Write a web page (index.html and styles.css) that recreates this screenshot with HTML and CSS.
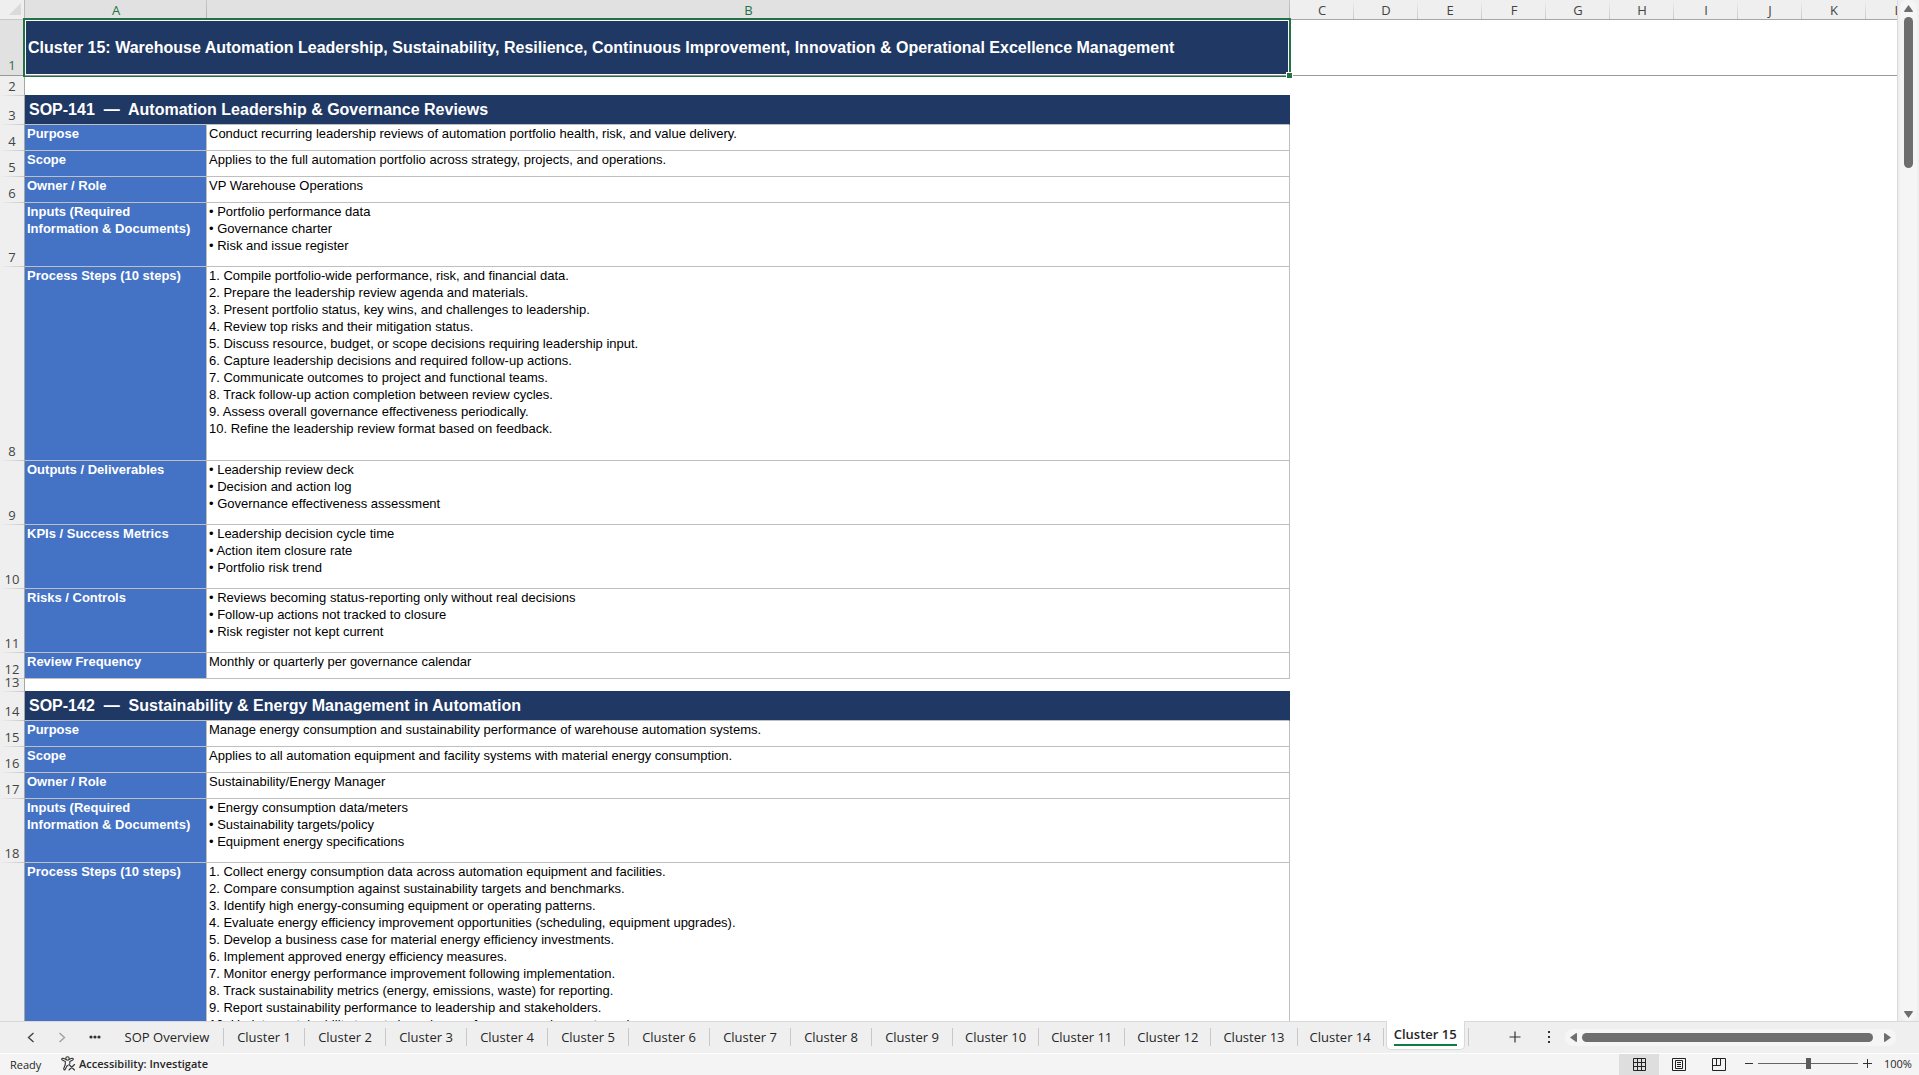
FILE: index.html
```html
<!DOCTYPE html>
<html lang="en">
<head>
  <meta charset="utf-8">
  <title>Cluster 15</title>
  <link rel="stylesheet" href="styles.css">
</head>
<body>
  <!--grid-->
  <main id="gridFrame">
    <div class="grid">
      <table class="sheet">
        <colgroup>
          <col class="col-num"><col class="col-a"><col class="col-b">
          <col span="10">
        </colgroup>
        <thead>
          <tr>
            <td class="corner"><svg width="12" height="12" viewBox="0 0 12 12"><path d="M12 0V12H0Z" fill="#dadada"/></svg></td>
            <th class="active">A</th><th class="active">B</th>
            <th>C</th><th>D</th><th>E</th><th>F</th><th>G</th><th>H</th><th>I</th><th>J</th><th>K</th><th>L</th>
          </tr>
        </thead>
        <tbody>
          <tr class="row-title">
            <th class="active">1</th>
            <td class="title" colspan="2">Cluster 15: Warehouse Automation Leadership, Sustainability, Resilience, Continuous Improvement, Innovation &amp; Operational Excellence Management<span class="selection"><span class="handle"></span></span></td>
            <td class="rest" colspan="10"></td>
          </tr>
          <tr class="row-gap"><th>2</th><td class="gap" colspan="2"></td></tr>

          <!--SOP-141-->
          <tr class="row-sop"><th>3</th><td class="sop" colspan="2">SOP-141&nbsp; —&nbsp; Automation Leadership &amp; Governance Reviews</td></tr>
          <tr class="row-line"><th>4</th><td class="label">Purpose</td><td>Conduct recurring leadership reviews of automation portfolio health, risk, and value delivery.</td></tr>
          <tr class="row-line"><th>5</th><td class="label">Scope</td><td>Applies to the full automation portfolio across strategy, projects, and operations.</td></tr>
          <tr class="row-line"><th>6</th><td class="label">Owner / Role</td><td>VP Warehouse Operations</td></tr>
          <tr class="row-list"><th>7</th><td class="label">Inputs (Required Information &amp; Documents)</td>
            <td>• Portfolio performance data<br>• Governance charter<br>• Risk and issue register</td></tr>
          <tr class="row-steps"><th>8</th><td class="label">Process Steps (10 steps)</td>
            <td>1. Compile portfolio-wide performance, risk, and financial data.<br>
              2. Prepare the leadership review agenda and materials.<br>
              3. Present portfolio status, key wins, and challenges to leadership.<br>
              4. Review top risks and their mitigation status.<br>
              5. Discuss resource, budget, or scope decisions requiring leadership input.<br>
              6. Capture leadership decisions and required follow-up actions.<br>
              7. Communicate outcomes to project and functional teams.<br>
              8. Track follow-up action completion between review cycles.<br>
              9. Assess overall governance effectiveness periodically.<br>
              10. Refine the leadership review format based on feedback.</td></tr>
          <tr class="row-list"><th>9</th><td class="label">Outputs / Deliverables</td>
            <td>• Leadership review deck<br>• Decision and action log<br>• Governance effectiveness assessment</td></tr>
          <tr class="row-list"><th>10</th><td class="label">KPIs / Success Metrics</td>
            <td>• Leadership decision cycle time<br>• Action item closure rate<br>• Portfolio risk trend</td></tr>
          <tr class="row-list"><th>11</th><td class="label">Risks / Controls</td>
            <td>• Reviews becoming status-reporting only without real decisions<br>• Follow-up actions not tracked to closure<br>• Risk register not kept current</td></tr>
          <tr class="row-line"><th>12</th><td class="label">Review Frequency</td><td>Monthly or quarterly per governance calendar</td></tr>
          <tr class="row-thin"><th>13</th><td class="gap" colspan="2"></td></tr>

          <!--SOP-142-->
          <tr class="row-sop"><th>14</th><td class="sop" colspan="2">SOP-142&nbsp; —&nbsp; Sustainability &amp; Energy Management in Automation</td></tr>
          <tr class="row-line"><th>15</th><td class="label">Purpose</td><td>Manage energy consumption and sustainability performance of warehouse automation systems.</td></tr>
          <tr class="row-line"><th>16</th><td class="label">Scope</td><td>Applies to all automation equipment and facility systems with material energy consumption.</td></tr>
          <tr class="row-line"><th>17</th><td class="label">Owner / Role</td><td>Sustainability/Energy Manager</td></tr>
          <tr class="row-list"><th>18</th><td class="label">Inputs (Required Information &amp; Documents)</td>
            <td>• Energy consumption data/meters<br>• Sustainability targets/policy<br>• Equipment energy specifications</td></tr>
          <tr class="row-steps"><th></th><td class="label">Process Steps (10 steps)</td>
            <td>1. Collect energy consumption data across automation equipment and facilities.<br>
              2. Compare consumption against sustainability targets and benchmarks.<br>
              3. Identify high energy-consuming equipment or operating patterns.<br>
              4. Evaluate energy efficiency improvement opportunities (scheduling, equipment upgrades).<br>
              5. Develop a business case for material energy efficiency investments.<br>
              6. Implement approved energy efficiency measures.<br>
              7. Monitor energy performance improvement following implementation.<br>
              8. Track sustainability metrics (energy, emissions, waste) for reporting.<br>
              9. Report sustainability performance to leadership and stakeholders.<br>
              10. Update sustainability targets based on performance and current needs.</td></tr>
        </tbody>
      </table>
    </div>
    <div class="scroll-side">
      <div class="vscroll">
        <button type="button" aria-label="Scroll up"><svg width="9" height="7" viewBox="0 0 9 7"><path d="M4.5 0 9 6.2Q9 7 8 7H1Q0 7 0 6.2Z" fill="#6e6e6e"/></svg></button>
        <div class="vthumb"></div>
        <button type="button" class="down" aria-label="Scroll down"><svg width="9" height="7" viewBox="0 0 9 7"><path d="M4.5 7 9 .8Q9 0 8 0H1Q0 0 0 .8Z" fill="#6e6e6e"/></svg></button>
      </div>
    </div>
  </main>

  <!--sheet tabs-->
  <nav class="tabbar">
    <div class="tab-nav">
      <button type="button" aria-label="Previous sheet"><svg width="8" height="11" viewBox="0 0 8 11"><path d="M6.500 1 1.500 5.500 6.500 10" fill="none" stroke="#444" stroke-width="1.400"/></svg></button>
      <button type="button" aria-label="Next sheet"><svg width="8" height="11" viewBox="0 0 8 11"><path d="M1.500 1 6.500 5.500 1.500 10" fill="none" stroke="#a0a0a0" stroke-width="1.400"/></svg></button>
      <button type="button" aria-label="More sheets"><svg width="12" height="4" viewBox="0 0 12 4"><circle cx="2" cy="2" r="1.600" fill="#333"/><circle cx="6" cy="2" r="1.600" fill="#333"/><circle cx="10" cy="2" r="1.600" fill="#333"/></svg></button>
    </div>
    <div class="tabs">
      <button type="button" class="tab">SOP Overview</button>
      <button type="button" class="tab">Cluster 1</button>
      <button type="button" class="tab">Cluster 2</button>
      <button type="button" class="tab">Cluster 3</button>
      <button type="button" class="tab">Cluster 4</button>
      <button type="button" class="tab">Cluster 5</button>
      <button type="button" class="tab">Cluster 6</button>
      <button type="button" class="tab">Cluster 7</button>
      <button type="button" class="tab">Cluster 8</button>
      <button type="button" class="tab">Cluster 9</button>
      <button type="button" class="tab">Cluster 10</button>
      <button type="button" class="tab">Cluster 11</button>
      <button type="button" class="tab">Cluster 12</button>
      <button type="button" class="tab">Cluster 13</button>
      <button type="button" class="tab">Cluster 14</button>
      <button type="button" class="tab current"><span>Cluster 15</span></button>
      <button type="button" class="add" aria-label="New sheet"><svg width="12" height="12" viewBox="0 0 12 12"><path d="M6 .5V11.500M.5 6H11.500" stroke="#333" stroke-width="1.200"/></svg></button>
    </div>
    <svg class="grip" width="2" height="12" viewBox="0 0 2 12"><path d="M0 1H2M0 6H2M0 11H2" stroke="#333" stroke-width="2"/></svg>
    <div class="hscroll">
      <button type="button" aria-label="Scroll left"><svg width="7" height="9" viewBox="0 0 7 9"><path d="M0 4.500 6.200 0Q7 0 7 1V8Q7 9 6.200 9Z" fill="#6e6e6e"/></svg></button>
      <div class="hthumb"></div>
      <button type="button" aria-label="Scroll right"><svg width="7" height="9" viewBox="0 0 7 9"><path d="M7 4.500.8 0Q0 0 0 1V8Q0 9 .8 9Z" fill="#6e6e6e"/></svg></button>
    </div>
  </nav>

  <!--status bar-->
  <footer class="status">
    <span class="ready">Ready</span>
    <button type="button" class="access">
      <svg width="15" height="15" viewBox="0 0 15 15" fill="none" stroke="#333" stroke-width="1.100" stroke-linejoin="round" stroke-linecap="round"><circle cx="6.500" cy="2.500" r="1.700"/><path d="M4.800 3.300 2 2.300Q.6 2.200.8 3.400L1.200 4 4.300 5.400V8.300L2.700 12.800Q2.800 14.200 4 13.800L6.200 9.600 7 9.800M8.200 3.300 11 2.300Q12.500 2.200 12.200 3.400L11.800 4 8.800 5.400V7.500M8 8.500 13.500 14M13.500 8.500 8 14"/></svg>
      Accessibility: Investigate
    </button>
    <div class="views">
      <button type="button" class="on" aria-label="Normal"><svg width="13" height="13" viewBox="0 0 13 13" fill="none" stroke="#222"><path d="M.5.5H12.500V12.500H.5ZM4.500.5V12.500M8.500.5V12.500M.5 4.500H12.500M.5 8.500H12.500"/></svg></button>
      <button type="button" aria-label="Page layout"><svg width="14" height="13" viewBox="0 0 14 13" fill="none" stroke="#222"><path d="M.5.5H13.500V12.500H.5ZM3.500 2.500H10.500V10.500H3.500ZM5 4.500H9M5 6.500H9M5 8.500H9"/></svg></button>
      <button type="button" aria-label="Page break preview"><svg width="14" height="13" viewBox="0 0 14 13" fill="none" stroke="#222"><path d="M.5.5H13.500V12.500H.5ZM4.500.5V7.500M8.500.5V7.500M.5 7.500H8.500"/></svg></button>
    </div>
    <div class="zoom">
      <button type="button" aria-label="Zoom out"><svg width="9" height="9" viewBox="0 0 9 9"><path d="M0 4.500H8" stroke="#333"/></svg></button>
      <input type="range" min="0" max="100" value="50" aria-label="Zoom">
      <button type="button" aria-label="Zoom in"><svg width="9" height="9" viewBox="0 0 9 9"><path d="M0 4.500H9M4.500 0V9" stroke="#333"/></svg></button>
      <span class="percent">100%</span>
    </div>
  </footer>
</body>
</html>
```
FILE: styles.css
```css
* {
  box-sizing: border-box;
}
html, body {
  height: 100%;
  margin: 0;
  overflow: hidden;
}
body {
  display: flex;
  flex-direction: column;
  background-color: #efefef;
  color: #262626;
  font-family: "Open Sans", sans-serif;
  font-size: 13px;
}
button {
  display: flex;
  align-items: center;
  justify-content: center;
  padding: 0;
  border: none;
  background: none;
  color: inherit;
  font: inherit;
}
svg {
  display: block;
  flex: none;
}

/* grid */
#gridFrame {
  flex: 1;
  min-height: 0;
  display: flex;
}
.grid {
  flex: 1;
  min-width: 0;
  overflow: hidden;
  background-color: #fff;
}
.sheet {
  width: 1930px;
  table-layout: fixed;
  border-collapse: separate;
  border-spacing: 0;
}
.sheet col {
  width: 64px;
}
.sheet .col-num {
  width: 25px;
}
.sheet .col-a {
  width: 182px;
}
.sheet .col-b {
  width: 1083px;
}
.sheet th, .sheet td {
  padding: 0;
}
.sheet th {
  color: #444;
  font-weight: 400;
}
.sheet thead tr {
  height: 20px;
}
.sheet thead th {
  line-height: 18px;
  border-bottom: 1px solid #a6a6a6;
  background: linear-gradient(#efefef, #c8c8c8) right / 1px 100% no-repeat #efefef;
}
.sheet thead .active {
  background: linear-gradient(#c8c8c8, #b0b0b0) right / 1px 100% no-repeat #e1e1e1;
  color: #217346;
}
.sheet .corner {
  padding: 3px 0 0 9px;
  vertical-align: top;
  border-right: 1px solid #b8b8b8;
  border-bottom: 1px solid #c8c8c8;
  background-color: #efefef;
}
.sheet tbody th {
  padding-bottom: 8px;
  vertical-align: bottom;
  line-height: 4px;
  border-right: 1px solid #a6a6a6;
  background: linear-gradient(to right, #efefef, #c8c8c8) bottom / 100% 1px no-repeat #efefef;
}
.sheet tbody .active {
  border-bottom: 1px solid #999;
  background: #e1e1e1;
  color: #217346;
}
.sheet tbody td {
  padding: 0 2px;
  vertical-align: top;
  border-right: 1px solid #bfbfbf;
  border-bottom: 1px solid #bfbfbf;
  color: #000;
  font-family: "Liberation Sans", Arial, sans-serif;
  line-height: 17px;
}
.sheet tbody .label {
  background-color: #4472c4;
  color: #fff;
  font-weight: 700;
}
.sheet tbody .title, .sheet tbody .sop {
  vertical-align: middle;
  background-color: #203864;
  color: #fff;
  font-size: 16px;
  font-weight: 700;
}
.sheet tbody .title {
  position: relative;
  padding-left: 3px;
  border-bottom-color: #999;
  box-shadow: inset 0 0 0 1px #fff;
}
.sheet tbody .sop {
  padding: 0 4px 2px;
  border-right-color: #203864;
}
.sheet tbody .rest {
  border-right: none;
  border-bottom-color: #999;
}
.sheet tbody .gap {
  border-right: none;
  border-bottom-color: #203864;
}
.selection {
  position: absolute;
  top: -2px;
  right: -2px;
  bottom: -2px;
  left: -2px;
  border: 2px solid #217346;
  border-bottom-width: 1px;
}
.handle {
  position: absolute;
  right: -4px;
  bottom: -3px;
  width: 7px;
  height: 7px;
  border: 1px solid #fff;
  background-color: #217346;
}
.row-title {
  height: 56px;
}
.row-gap {
  height: 20px;
}
.row-thin {
  height: 13px;
}
.row-sop {
  height: 29px;
}
.row-line {
  height: 26px;
}
.row-list {
  height: 64px;
}
.row-steps {
  height: 194px;
}

/* scrollbars */
.scroll-side {
  display: flex;
  width: 22px;
  padding: 0 2px;
  border-left: 1px solid #d9d9d9;
}
.vscroll {
  display: flex;
  flex-direction: column;
  align-items: center;
  width: 17px;
  padding: 5px 0 3px;
  border-radius: 8px;
  background-color: #f5f5f5;
}
.vthumb {
  width: 9px;
  height: 151px;
  margin-top: 5px;
  border-radius: 5px;
  background-color: #6e6e6e;
}
.vscroll .down {
  margin-top: auto;
}
.hscroll {
  display: flex;
  align-items: center;
  width: 331px;
  height: 17px;
  padding: 0 5px;
  border-radius: 8px;
  background-color: #f5f5f5;
}
.hthumb {
  flex: 1;
  height: 9px;
  margin: 0 11px 0 5px;
  border-radius: 5px;
  background-color: #6e6e6e;
}

/* sheet tabs */
.tabbar {
  display: flex;
  align-items: center;
  height: 32px;
  padding: 0 23px 1px 0;
  border-top: 1px solid #d9d9d9;
}
.tab-nav {
  display: flex;
  align-items: center;
  gap: 23px;
  width: 111px;
  padding-left: 27px;
}
.tabs {
  flex: 1;
  display: flex;
  align-items: center;
  align-self: stretch;
}
.tab {
  min-width: 81px;
  height: 18px;
  padding: 0 12px;
  border-right: 1px solid #c8c8c8;
  white-space: nowrap;
}
.tab:first-child {
  min-width: 113px;
}
.tab.current {
  align-self: flex-start;
  min-width: 78px;
  height: 29px;
  margin: -1px 3px 0 2px;
  padding: 0 7px;
  border: 1px solid #d9d9d9;
  border-top: none;
  border-radius: 0 0 5px 5px;
  background-color: #fff;
  font-weight: 600;
}
.tab.current span {
  line-height: 20px;
  border-bottom: 2px solid #107c41;
}
.add {
  height: 18px;
  padding-left: 40px;
  border-left: 1px solid #c8c8c8;
}
.grip {
  margin-right: 15px;
}

/* status bar */
.status {
  display: flex;
  align-items: center;
  height: 22px;
  border-top: 1px solid #fff;
  background-color: #f4f4f4;
  font-size: 11px;
}
.ready {
  width: 61px;
  padding-left: 10px;
}
.access {
  gap: 3px;
  padding-bottom: 2px;
  font-weight: 600;
}
.views {
  display: flex;
  align-self: stretch;
  margin-left: auto;
}
.views button {
  width: 40px;
}
.views .on {
  background-color: #dedede;
}
.zoom {
  display: flex;
  align-items: center;
  width: 180px;
  padding: 0 0 2px 6px;
}
.zoom input {
  width: 100px;
  height: 11px;
  margin: 0 5px 0 4px;
  appearance: none;
  background: linear-gradient(#666, #666) center / 100% 1px no-repeat;
}
.zoom input::-webkit-slider-thumb {
  appearance: none;
  width: 5px;
  height: 11px;
  background-color: #5c5c5c;
}
.percent {
  margin-left: 12px;
}
```
